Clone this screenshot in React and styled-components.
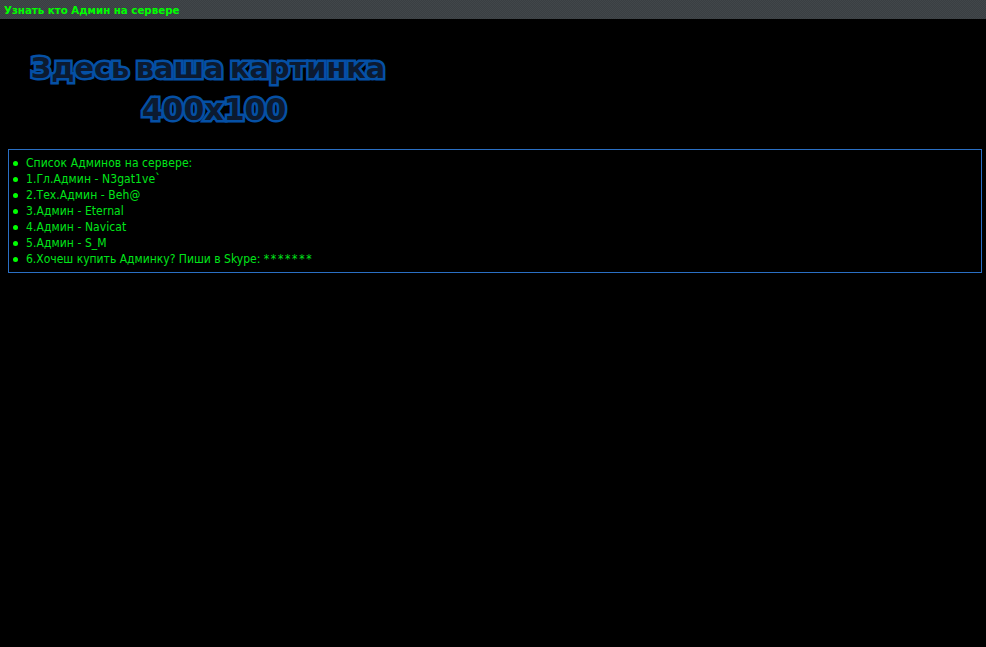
import React from "react";
import styled, { createGlobalStyle } from "styled-components";

const Global = createGlobalStyle`
  html, body { margin: 0; padding: 0; background: #000; }
  body { width: 986px; height: 647px; overflow: hidden; }
`;

const Page = styled.div`
  display: flex;
  flex-direction: column;
  width: 986px;
  height: 647px;
  background: #000;
`;

const TitleBar = styled.header`
  height: 19px;
  padding: 0 4px;
  display: flex;
  align-items: center;
  background-color: #3d4245;
  background-image: repeating-conic-gradient(#3a3f42 0% 25%, #41464a 0% 50%);
  background-size: 2px 2px;
  color: #00ff00;
  font: bold 10.25px/18px "DejaVu Sans", sans-serif;
`;

const Content = styled.main`
  display: flex;
  flex-direction: column;
  padding: 28px 4px 0 8px;
`;

const Banner = styled.div`
  width: 400px;
  height: 102px;
  display: flex;
  flex-direction: column;
  align-items: center;
`;

const BannerLine = styled.span`
  color: #0c1a30;
  font: bold ${(p) => p.$size}px/42px "DejaVu Sans", sans-serif;
  padding-left: ${(p) => p.$indent}px;
  word-spacing: -3.5px;
  -webkit-text-stroke: 5px #0550a5;
  paint-order: stroke fill;
`;

const AdminBox = styled.ul`
  list-style: none;
  margin: 0;
  padding: 5px 4px;
  border: 1px solid #2a6fc4;
  display: flex;
  flex-direction: column;
`;

const AdminRow = styled.li`
  display: flex;
  align-items: center;
  gap: 8px;
  height: 16px;
  color: #00e51a;
  font: 12px/16px "DejaVu Sans Condensed", "DejaVu Sans", sans-serif;
  letter-spacing: ${(p) => (p.$tight ? 0 : 0.08)}px;
  white-space: pre;
`;

const Bullet = styled.span`
  width: 5px;
  height: 5px;
  border-radius: 50%;
  background: #00ff00;
  flex: none;
`;

const Stars = styled.span`
  letter-spacing: 1.7px;
`;

const rows = [
  "Список Админов на сервере:",
  "1.Гл.Админ - N3gat1ve`",
  "2.Тех.Админ - Beh@",
  "3.Админ - Eternal",
  "4.Админ - Navicat",
  "5.Админ - S_M",
];

export default function App() {
  return (
    <Page>
      <Global />
      <TitleBar>Узнать кто Админ на сервере</TitleBar>
      <Content>
        <Banner>
          <BannerLine $size={28.8} $indent={0}>Здесь ваша картинка</BannerLine>
          <BannerLine $size={30} $indent={12}>400x100</BannerLine>
        </Banner>
        <AdminBox>
          {rows.map((r) => (
            <AdminRow key={r}>
              <Bullet />
              {r}
            </AdminRow>
          ))}
          <AdminRow $tight>
            <Bullet />
            <span>6.Хочеш купить Админку? Пиши в Skype: <Stars>*******</Stars></span>
          </AdminRow>
        </AdminBox>
      </Content>
    </Page>
  );
}
